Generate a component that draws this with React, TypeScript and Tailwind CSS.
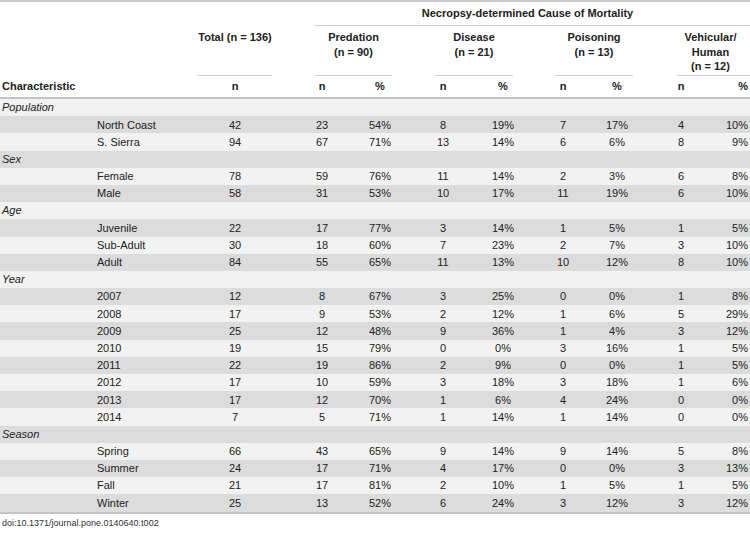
import React from "react";

type Row = { label: string; total: string; v: string[] };
type Group = { name: string; rows: Row[] };

const groups: Group[] = [
  {
    name: "Population",
    rows: [
      { label: "North Coast", total: "42", v: ["23", "54%", "8", "19%", "7", "17%", "4", "10%"] },
      { label: "S. Sierra", total: "94", v: ["67", "71%", "13", "14%", "6", "6%", "8", "9%"] },
    ],
  },
  {
    name: "Sex",
    rows: [
      { label: "Female", total: "78", v: ["59", "76%", "11", "14%", "2", "3%", "6", "8%"] },
      { label: "Male", total: "58", v: ["31", "53%", "10", "17%", "11", "19%", "6", "10%"] },
    ],
  },
  {
    name: "Age",
    rows: [
      { label: "Juvenile", total: "22", v: ["17", "77%", "3", "14%", "1", "5%", "1", "5%"] },
      { label: "Sub-Adult", total: "30", v: ["18", "60%", "7", "23%", "2", "7%", "3", "10%"] },
      { label: "Adult", total: "84", v: ["55", "65%", "11", "13%", "10", "12%", "8", "10%"] },
    ],
  },
  {
    name: "Year",
    rows: [
      { label: "2007", total: "12", v: ["8", "67%", "3", "25%", "0", "0%", "1", "8%"] },
      { label: "2008", total: "17", v: ["9", "53%", "2", "12%", "1", "6%", "5", "29%"] },
      { label: "2009", total: "25", v: ["12", "48%", "9", "36%", "1", "4%", "3", "12%"] },
      { label: "2010", total: "19", v: ["15", "79%", "0", "0%", "3", "16%", "1", "5%"] },
      { label: "2011", total: "22", v: ["19", "86%", "2", "9%", "0", "0%", "1", "5%"] },
      { label: "2012", total: "17", v: ["10", "59%", "3", "18%", "3", "18%", "1", "6%"] },
      { label: "2013", total: "17", v: ["12", "70%", "1", "6%", "4", "24%", "0", "0%"] },
      { label: "2014", total: "7", v: ["5", "71%", "1", "14%", "1", "14%", "0", "0%"] },
    ],
  },
  {
    name: "Season",
    rows: [
      { label: "Spring", total: "66", v: ["43", "65%", "9", "14%", "9", "14%", "5", "8%"] },
      { label: "Summer", total: "24", v: ["17", "71%", "4", "17%", "0", "0%", "3", "13%"] },
      { label: "Fall", total: "21", v: ["17", "81%", "2", "10%", "1", "5%", "1", "5%"] },
      { label: "Winter", total: "25", v: ["13", "52%", "6", "24%", "3", "12%", "3", "12%"] },
    ],
  },
];

const GRID =
  "grid grid-cols-[195px_80px_20px_54px_62px_64px_56px_64px_44px_84px_27px]";

type Line =
  | { kind: "group"; name: string }
  | { kind: "row"; row: Row };

const lines: Line[] = [];
groups.forEach((g) => {
  lines.push({ kind: "group", name: g.name });
  g.rows.forEach((r) => lines.push({ kind: "row", row: r }));
});

export default function App() {
  return (
    <div
      className="w-[750px] h-[534px] overflow-hidden bg-white text-[#222] text-[11px]"
      style={{ fontFamily: '"Liberation Sans", Arial, Helvetica, sans-serif' }}
    >
      <div className="border-t-2 border-[#c9c9c9]">
        {/* Header row 1 */}
        <div className={`${GRID} h-[24px]`}>
          <div className="col-span-3" />
          <div className="col-span-8 ml-[20px] border-b border-[#cfcfcf] flex items-center justify-center pr-[10px] font-bold">
            Necropsy-determined Cause of Mortality
          </div>
        </div>
        {/* Header row 2 */}
        <div className={`${GRID} h-[50px] font-bold leading-[14.5px]`}>
          <div />
          <div className="mx-[3px] border-b border-[#cfcfcf] pt-[4px] text-center">
            Total (n = 136)
          </div>
          <div />
          <div className="col-span-2 ml-[20px] mr-[19px] border-b border-[#cfcfcf] pt-[4px] text-center">
            Predation
            <br />
            (n = 90)
          </div>
          <div className="col-span-2 ml-[24px] mr-[18px] border-b border-[#cfcfcf] pt-[4px] text-center">
            Disease
            <br />
            (n = 21)
          </div>
          <div className="col-span-2 ml-[24px] mr-[6px] border-b border-[#cfcfcf] pt-[4px] text-center">
            Poisoning
            <br />
            (n = 13)
          </div>
          <div className="col-span-2 ml-[38px] border-b border-[#cfcfcf] pt-[4px] pr-[6px] text-center">
            Vehicular/
            <br />
            Human
            <br />
            (n = 12)
          </div>
        </div>
        {/* Header row 3 */}
        <div className={`${GRID} h-[23px] items-center font-bold border-b-2 border-[#c4c4c4]`}>
          <div className="pl-[2px]">Characteristic</div>
          <div className="text-center">n</div>
          <div />
          <div className="text-center">n</div>
          <div className="text-center">%</div>
          <div className="text-center">n</div>
          <div className="text-center">%</div>
          <div className="text-center">n</div>
          <div className="text-center">%</div>
          <div className="text-center">n</div>
          <div className="text-right pr-[2px]">%</div>
        </div>
      </div>

      {/* Body */}
      <div className="border-b-2 border-[#c4c4c4]">
        {lines.map((ln, i) => {
          const bg = i % 2 === 0 ? "bg-[#f2f2f2]" : "bg-[#dcdcdd]";
          if (ln.kind === "group") {
            return (
              <div key={i} className={`${GRID} h-[17.2px] items-center ${bg}`}>
                <div className="pl-[2px] italic">{ln.name}</div>
              </div>
            );
          }
          const r = ln.row;
          return (
            <div key={i} className={`${GRID} h-[17.2px] items-center ${bg}`}>
              <div className="pl-[97px]">{r.label}</div>
              <div className="text-center">{r.total}</div>
              <div />
              {r.v.map((val, j) => (
                <div
                  key={j}
                  className={j === 7 ? "text-right pr-[2px]" : "text-center"}
                >
                  {val}
                </div>
              ))}
            </div>
          );
        })}
      </div>

      <div className="pl-[2px] mt-[3px] text-[9px] leading-[12px] text-[#333]">
        doi:10.1371/journal.pone.0140640.t002
      </div>
    </div>
  );
}
